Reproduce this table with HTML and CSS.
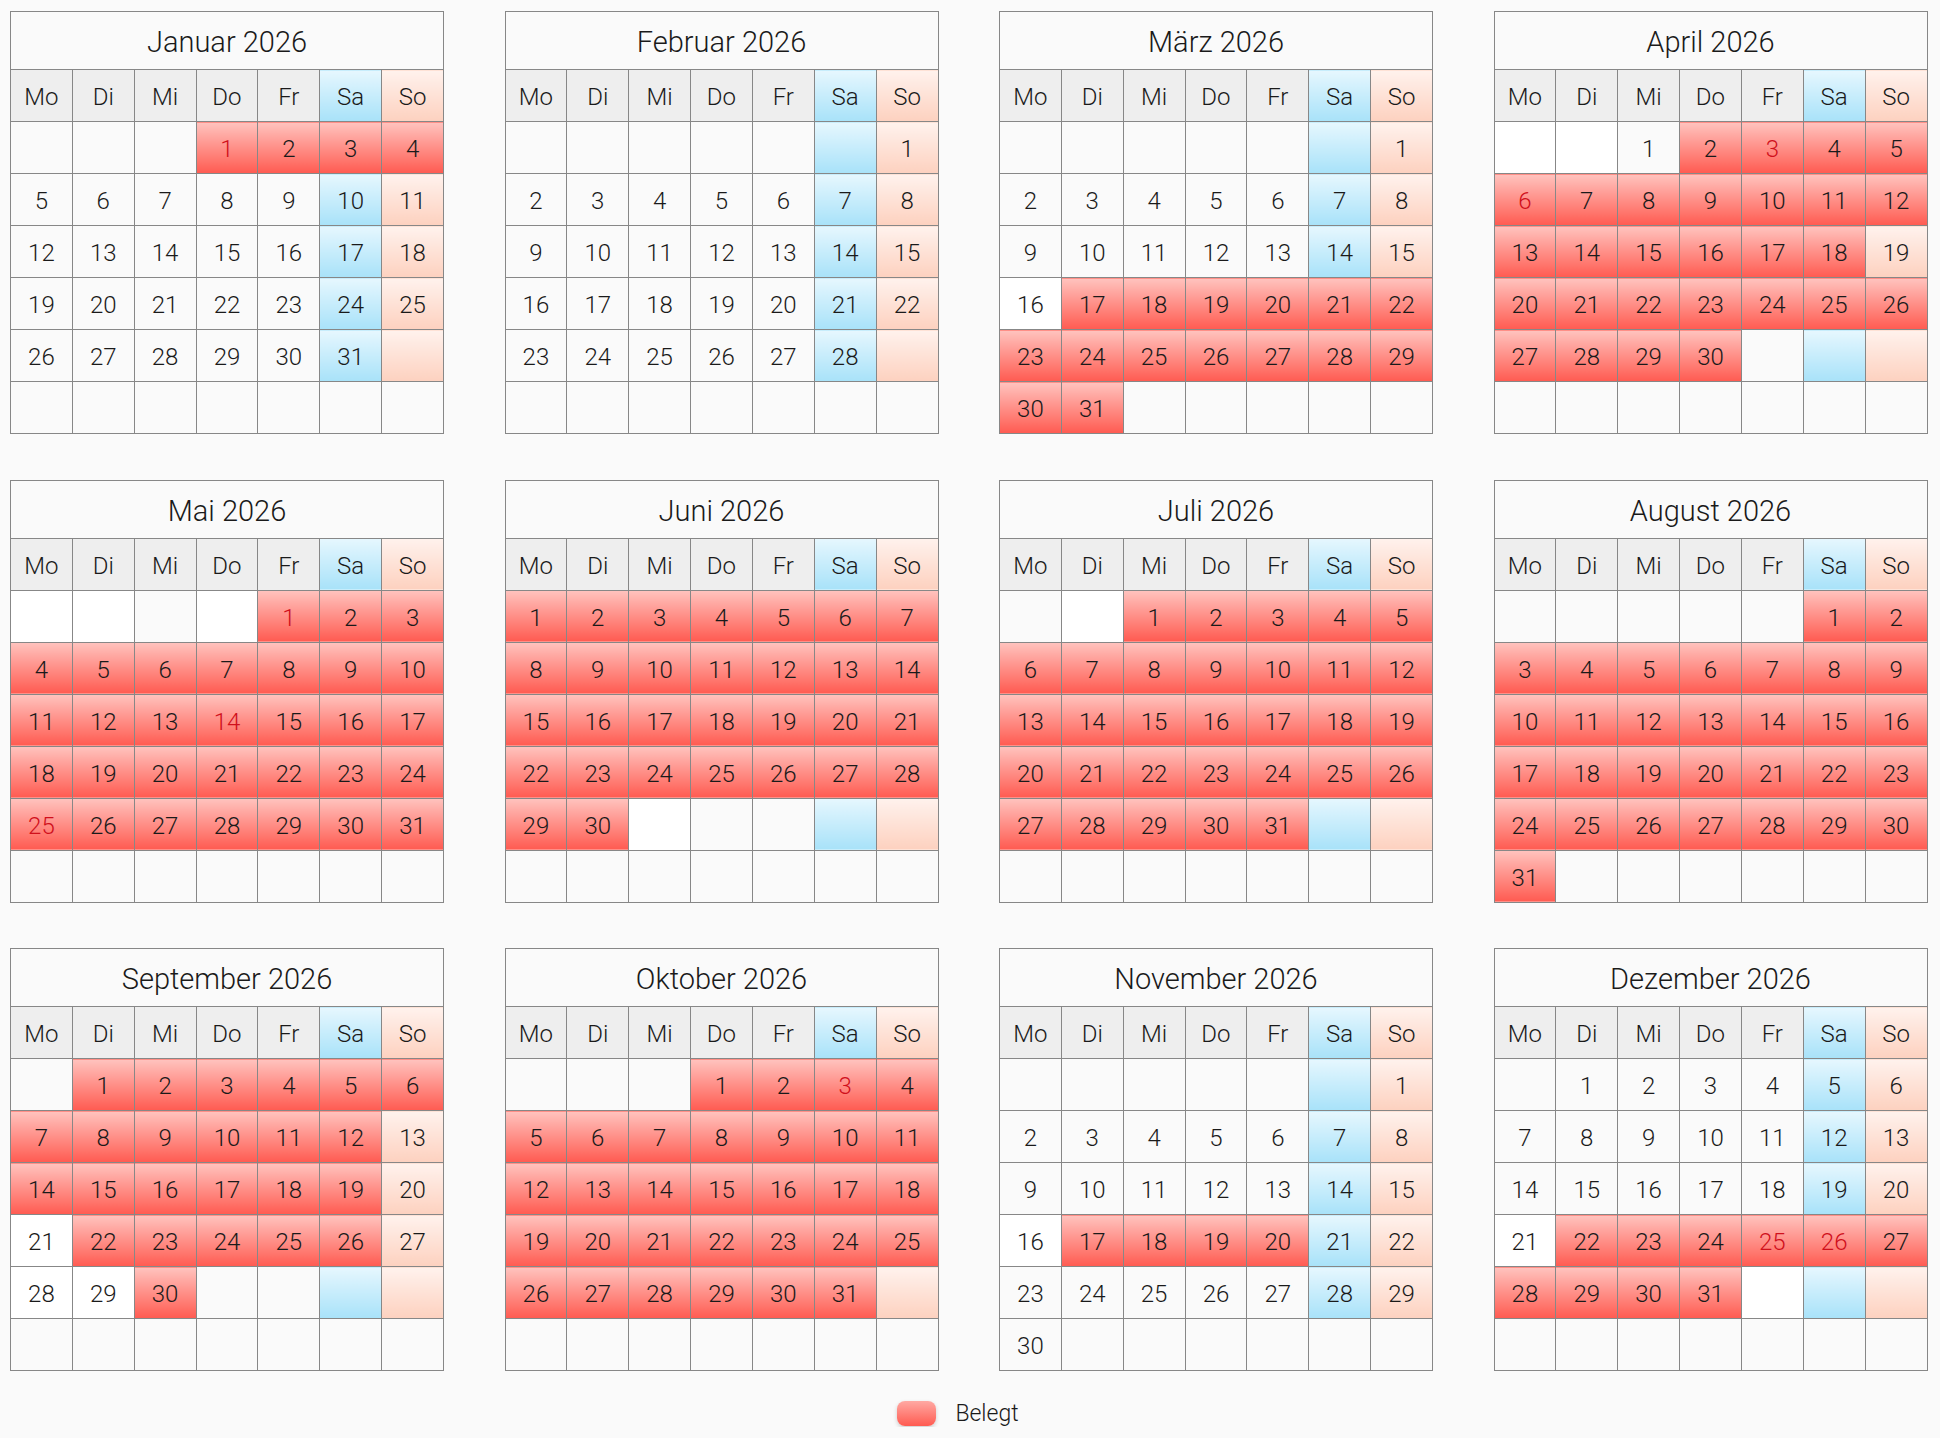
FILE: index.html
```html
<!DOCTYPE html>
<html lang="de">
<head>
<meta charset="utf-8">
<title>Belegungskalender 2026</title>
<link rel="stylesheet" href="styles.css">
</head>
<body>
<div class="year">

<table class="cal">
<thead>
<tr class="title"><th colspan="7">Januar 2026</th></tr>
<tr class="days"><th>Mo</th><th>Di</th><th>Mi</th><th>Do</th><th>Fr</th><th class="sa">Sa</th><th class="so">So</th></tr>
</thead>
<tbody>
<tr><td></td><td></td><td></td><td class="b h">1</td><td class="b">2</td><td class="b">3</td><td class="b">4</td></tr>
<tr><td>5</td><td>6</td><td>7</td><td>8</td><td>9</td><td class="sa">10</td><td class="so">11</td></tr>
<tr><td>12</td><td>13</td><td>14</td><td>15</td><td>16</td><td class="sa">17</td><td class="so">18</td></tr>
<tr><td>19</td><td>20</td><td>21</td><td>22</td><td>23</td><td class="sa">24</td><td class="so">25</td></tr>
<tr><td>26</td><td>27</td><td>28</td><td>29</td><td>30</td><td class="sa">31</td><td class="so"></td></tr>
<tr><td></td><td></td><td></td><td></td><td></td><td></td><td></td></tr>
</tbody>
</table>

<table class="cal">
<thead>
<tr class="title"><th colspan="7">Februar 2026</th></tr>
<tr class="days"><th>Mo</th><th>Di</th><th>Mi</th><th>Do</th><th>Fr</th><th class="sa">Sa</th><th class="so">So</th></tr>
</thead>
<tbody>
<tr><td></td><td></td><td></td><td></td><td></td><td class="sa"></td><td class="so">1</td></tr>
<tr><td>2</td><td>3</td><td>4</td><td>5</td><td>6</td><td class="sa">7</td><td class="so">8</td></tr>
<tr><td>9</td><td>10</td><td>11</td><td>12</td><td>13</td><td class="sa">14</td><td class="so">15</td></tr>
<tr><td>16</td><td>17</td><td>18</td><td>19</td><td>20</td><td class="sa">21</td><td class="so">22</td></tr>
<tr><td>23</td><td>24</td><td>25</td><td>26</td><td>27</td><td class="sa">28</td><td class="so"></td></tr>
<tr><td></td><td></td><td></td><td></td><td></td><td></td><td></td></tr>
</tbody>
</table>

<table class="cal">
<thead>
<tr class="title"><th colspan="7">März 2026</th></tr>
<tr class="days"><th>Mo</th><th>Di</th><th>Mi</th><th>Do</th><th>Fr</th><th class="sa">Sa</th><th class="so">So</th></tr>
</thead>
<tbody>
<tr><td></td><td></td><td></td><td></td><td></td><td class="sa"></td><td class="so">1</td></tr>
<tr><td>2</td><td>3</td><td>4</td><td>5</td><td>6</td><td class="sa">7</td><td class="so">8</td></tr>
<tr><td>9</td><td>10</td><td>11</td><td>12</td><td>13</td><td class="sa">14</td><td class="so">15</td></tr>
<tr><td class="w">16</td><td class="b">17</td><td class="b">18</td><td class="b">19</td><td class="b">20</td><td class="b">21</td><td class="b">22</td></tr>
<tr><td class="b">23</td><td class="b">24</td><td class="b">25</td><td class="b">26</td><td class="b">27</td><td class="b">28</td><td class="b">29</td></tr>
<tr><td class="b">30</td><td class="b">31</td><td></td><td></td><td></td><td></td><td></td></tr>
</tbody>
</table>

<table class="cal">
<thead>
<tr class="title"><th colspan="7">April 2026</th></tr>
<tr class="days"><th>Mo</th><th>Di</th><th>Mi</th><th>Do</th><th>Fr</th><th class="sa">Sa</th><th class="so">So</th></tr>
</thead>
<tbody>
<tr><td class="w"></td><td class="w"></td><td>1</td><td class="b">2</td><td class="b h">3</td><td class="b">4</td><td class="b">5</td></tr>
<tr><td class="b h">6</td><td class="b">7</td><td class="b">8</td><td class="b">9</td><td class="b">10</td><td class="b">11</td><td class="b">12</td></tr>
<tr><td class="b">13</td><td class="b">14</td><td class="b">15</td><td class="b">16</td><td class="b">17</td><td class="b">18</td><td class="so">19</td></tr>
<tr><td class="b">20</td><td class="b">21</td><td class="b">22</td><td class="b">23</td><td class="b">24</td><td class="b">25</td><td class="b">26</td></tr>
<tr><td class="b">27</td><td class="b">28</td><td class="b">29</td><td class="b">30</td><td></td><td class="sa"></td><td class="so"></td></tr>
<tr><td></td><td></td><td></td><td></td><td></td><td></td><td></td></tr>
</tbody>
</table>

<table class="cal">
<thead>
<tr class="title"><th colspan="7">Mai 2026</th></tr>
<tr class="days"><th>Mo</th><th>Di</th><th>Mi</th><th>Do</th><th>Fr</th><th class="sa">Sa</th><th class="so">So</th></tr>
</thead>
<tbody>
<tr><td class="w"></td><td class="w"></td><td></td><td class="w"></td><td class="b h">1</td><td class="b">2</td><td class="b">3</td></tr>
<tr><td class="b">4</td><td class="b">5</td><td class="b">6</td><td class="b">7</td><td class="b">8</td><td class="b">9</td><td class="b">10</td></tr>
<tr><td class="b">11</td><td class="b">12</td><td class="b">13</td><td class="b h">14</td><td class="b">15</td><td class="b">16</td><td class="b">17</td></tr>
<tr><td class="b">18</td><td class="b">19</td><td class="b">20</td><td class="b">21</td><td class="b">22</td><td class="b">23</td><td class="b">24</td></tr>
<tr><td class="b h">25</td><td class="b">26</td><td class="b">27</td><td class="b">28</td><td class="b">29</td><td class="b">30</td><td class="b">31</td></tr>
<tr><td></td><td></td><td></td><td></td><td></td><td></td><td></td></tr>
</tbody>
</table>

<table class="cal">
<thead>
<tr class="title"><th colspan="7">Juni 2026</th></tr>
<tr class="days"><th>Mo</th><th>Di</th><th>Mi</th><th>Do</th><th>Fr</th><th class="sa">Sa</th><th class="so">So</th></tr>
</thead>
<tbody>
<tr><td class="b">1</td><td class="b">2</td><td class="b">3</td><td class="b">4</td><td class="b">5</td><td class="b">6</td><td class="b">7</td></tr>
<tr><td class="b">8</td><td class="b">9</td><td class="b">10</td><td class="b">11</td><td class="b">12</td><td class="b">13</td><td class="b">14</td></tr>
<tr><td class="b">15</td><td class="b">16</td><td class="b">17</td><td class="b">18</td><td class="b">19</td><td class="b">20</td><td class="b">21</td></tr>
<tr><td class="b">22</td><td class="b">23</td><td class="b">24</td><td class="b">25</td><td class="b">26</td><td class="b">27</td><td class="b">28</td></tr>
<tr><td class="b">29</td><td class="b">30</td><td class="w"></td><td></td><td></td><td class="sa"></td><td class="so"></td></tr>
<tr><td></td><td></td><td></td><td></td><td></td><td></td><td></td></tr>
</tbody>
</table>

<table class="cal">
<thead>
<tr class="title"><th colspan="7">Juli 2026</th></tr>
<tr class="days"><th>Mo</th><th>Di</th><th>Mi</th><th>Do</th><th>Fr</th><th class="sa">Sa</th><th class="so">So</th></tr>
</thead>
<tbody>
<tr><td></td><td class="w"></td><td class="b">1</td><td class="b">2</td><td class="b">3</td><td class="b">4</td><td class="b">5</td></tr>
<tr><td class="b">6</td><td class="b">7</td><td class="b">8</td><td class="b">9</td><td class="b">10</td><td class="b">11</td><td class="b">12</td></tr>
<tr><td class="b">13</td><td class="b">14</td><td class="b">15</td><td class="b">16</td><td class="b">17</td><td class="b">18</td><td class="b">19</td></tr>
<tr><td class="b">20</td><td class="b">21</td><td class="b">22</td><td class="b">23</td><td class="b">24</td><td class="b">25</td><td class="b">26</td></tr>
<tr><td class="b">27</td><td class="b">28</td><td class="b">29</td><td class="b">30</td><td class="b">31</td><td class="sa"></td><td class="so"></td></tr>
<tr><td></td><td></td><td></td><td></td><td></td><td></td><td></td></tr>
</tbody>
</table>

<table class="cal">
<thead>
<tr class="title"><th colspan="7">August 2026</th></tr>
<tr class="days"><th>Mo</th><th>Di</th><th>Mi</th><th>Do</th><th>Fr</th><th class="sa">Sa</th><th class="so">So</th></tr>
</thead>
<tbody>
<tr><td></td><td></td><td></td><td></td><td></td><td class="b">1</td><td class="b">2</td></tr>
<tr><td class="b">3</td><td class="b">4</td><td class="b">5</td><td class="b">6</td><td class="b">7</td><td class="b">8</td><td class="b">9</td></tr>
<tr><td class="b">10</td><td class="b">11</td><td class="b">12</td><td class="b">13</td><td class="b">14</td><td class="b">15</td><td class="b">16</td></tr>
<tr><td class="b">17</td><td class="b">18</td><td class="b">19</td><td class="b">20</td><td class="b">21</td><td class="b">22</td><td class="b">23</td></tr>
<tr><td class="b">24</td><td class="b">25</td><td class="b">26</td><td class="b">27</td><td class="b">28</td><td class="b">29</td><td class="b">30</td></tr>
<tr><td class="b">31</td><td></td><td></td><td></td><td></td><td></td><td></td></tr>
</tbody>
</table>

<table class="cal">
<thead>
<tr class="title"><th colspan="7">September 2026</th></tr>
<tr class="days"><th>Mo</th><th>Di</th><th>Mi</th><th>Do</th><th>Fr</th><th class="sa">Sa</th><th class="so">So</th></tr>
</thead>
<tbody>
<tr><td></td><td class="b">1</td><td class="b">2</td><td class="b">3</td><td class="b">4</td><td class="b">5</td><td class="b">6</td></tr>
<tr><td class="b">7</td><td class="b">8</td><td class="b">9</td><td class="b">10</td><td class="b">11</td><td class="b">12</td><td class="so">13</td></tr>
<tr><td class="b">14</td><td class="b">15</td><td class="b">16</td><td class="b">17</td><td class="b">18</td><td class="b">19</td><td class="so">20</td></tr>
<tr><td class="w">21</td><td class="b">22</td><td class="b">23</td><td class="b">24</td><td class="b">25</td><td class="b">26</td><td class="so">27</td></tr>
<tr><td class="w">28</td><td class="w">29</td><td class="b">30</td><td></td><td></td><td class="sa"></td><td class="so"></td></tr>
<tr><td></td><td></td><td></td><td></td><td></td><td></td><td></td></tr>
</tbody>
</table>

<table class="cal">
<thead>
<tr class="title"><th colspan="7">Oktober 2026</th></tr>
<tr class="days"><th>Mo</th><th>Di</th><th>Mi</th><th>Do</th><th>Fr</th><th class="sa">Sa</th><th class="so">So</th></tr>
</thead>
<tbody>
<tr><td></td><td></td><td></td><td class="b">1</td><td class="b">2</td><td class="b h">3</td><td class="b">4</td></tr>
<tr><td class="b">5</td><td class="b">6</td><td class="b">7</td><td class="b">8</td><td class="b">9</td><td class="b">10</td><td class="b">11</td></tr>
<tr><td class="b">12</td><td class="b">13</td><td class="b">14</td><td class="b">15</td><td class="b">16</td><td class="b">17</td><td class="b">18</td></tr>
<tr><td class="b">19</td><td class="b">20</td><td class="b">21</td><td class="b">22</td><td class="b">23</td><td class="b">24</td><td class="b">25</td></tr>
<tr><td class="b">26</td><td class="b">27</td><td class="b">28</td><td class="b">29</td><td class="b">30</td><td class="b">31</td><td class="so"></td></tr>
<tr><td></td><td></td><td></td><td></td><td></td><td></td><td></td></tr>
</tbody>
</table>

<table class="cal">
<thead>
<tr class="title"><th colspan="7">November 2026</th></tr>
<tr class="days"><th>Mo</th><th>Di</th><th>Mi</th><th>Do</th><th>Fr</th><th class="sa">Sa</th><th class="so">So</th></tr>
</thead>
<tbody>
<tr><td></td><td></td><td></td><td></td><td></td><td class="sa"></td><td class="so">1</td></tr>
<tr><td>2</td><td>3</td><td>4</td><td>5</td><td>6</td><td class="sa">7</td><td class="so">8</td></tr>
<tr><td>9</td><td>10</td><td>11</td><td>12</td><td>13</td><td class="sa">14</td><td class="so">15</td></tr>
<tr><td class="w">16</td><td class="b">17</td><td class="b">18</td><td class="b">19</td><td class="b">20</td><td class="sa">21</td><td class="so">22</td></tr>
<tr><td>23</td><td>24</td><td>25</td><td>26</td><td>27</td><td class="sa">28</td><td class="so">29</td></tr>
<tr><td>30</td><td></td><td></td><td></td><td></td><td></td><td></td></tr>
</tbody>
</table>

<table class="cal">
<thead>
<tr class="title"><th colspan="7">Dezember 2026</th></tr>
<tr class="days"><th>Mo</th><th>Di</th><th>Mi</th><th>Do</th><th>Fr</th><th class="sa">Sa</th><th class="so">So</th></tr>
</thead>
<tbody>
<tr><td></td><td>1</td><td>2</td><td>3</td><td>4</td><td class="sa">5</td><td class="so">6</td></tr>
<tr><td>7</td><td>8</td><td>9</td><td>10</td><td>11</td><td class="sa">12</td><td class="so">13</td></tr>
<tr><td>14</td><td>15</td><td>16</td><td>17</td><td>18</td><td class="sa">19</td><td class="so">20</td></tr>
<tr><td class="w">21</td><td class="b">22</td><td class="b">23</td><td class="b">24</td><td class="b h">25</td><td class="b h">26</td><td class="b">27</td></tr>
<tr><td class="b">28</td><td class="b">29</td><td class="b">30</td><td class="b">31</td><td class="w"></td><td class="sa"></td><td class="so"></td></tr>
<tr><td></td><td></td><td></td><td></td><td></td><td></td><td></td></tr>
</tbody>
</table>

</div>

<div class="legend">
<span class="swatch"></span>
<span class="legend-label">Belegt</span>
</div>
</body>
</html>
```

FILE: styles.css
```css
html, body {
  margin: 0;
  padding: 0;
  background: #fafafa;
}

body {
  font-family: Roboto, "Liberation Sans", sans-serif;
  font-weight: 300;
  color: #1a1a1a;
}

.year {
  display: grid;
  grid-template-columns: repeat(4, 434px);
  column-gap: 60.5px;
  row-gap: 45.5px;
  padding: 11px 0 0 10px;
}

.cal {
  border-collapse: collapse;
  table-layout: fixed;
  width: 434px;
}

.cal th,
.cal td {
  border: 1px solid #878787;
  padding: 0;
  text-align: center;
  vertical-align: middle;
  font-weight: 300;
}

.cal .title th {
  height: 54px;
  padding-top: 3px;
  font-size: 29px;
  background: #fafafa;
}

.cal .days th {
  height: 48px;
  padding-top: 3px;
  font-size: 24px;
  background: #eeeeee;
}

.cal td {
  height: 48px;
  padding-top: 3px;
  font-size: 24px;
  background: #fafafa;
}

.cal .days th.sa,
.cal td.sa {
  background: linear-gradient(#e6f7fe, #a8e2f9);
}

.cal .days th.so,
.cal td.so {
  background: linear-gradient(#fff2ed, #fdd1bf);
}

.cal td.w {
  background: #ffffff;
}

.cal td.b {
  background: linear-gradient(#ffc3be, #ff5b51);
}

.cal td.h {
  color: #d0101c;
}

.legend {
  display: flex;
  justify-content: center;
  align-items: center;
  gap: 19px;
  padding: 29px 24px 0 0;
}

.swatch {
  width: 39px;
  height: 25px;
  border-radius: 8px;
  background: linear-gradient(#ffa9a3, #ff5b51);
  box-shadow: 0 2px 4px rgba(0, 0, 0, 0.18);
}

.legend-label {
  font-size: 23px;
}
```
